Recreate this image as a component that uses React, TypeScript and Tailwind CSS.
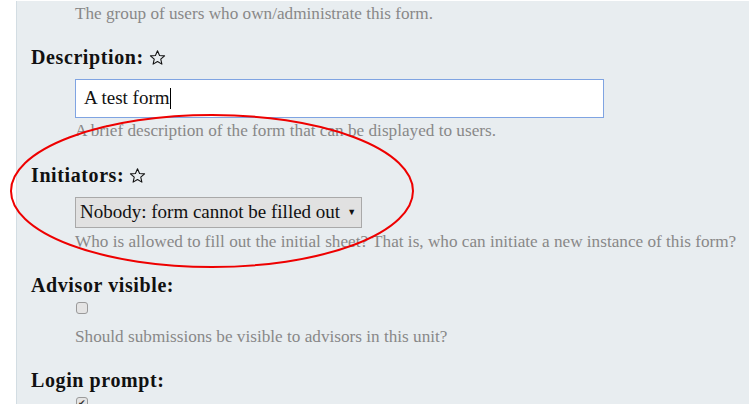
import React from "react";

const serif = { fontFamily: '"Liberation Serif", "DejaVu Serif", serif' };

const Star = () => (
  <svg width="17" height="17" viewBox="0 0 24 24" className="inline-block ml-[5px] -mt-[4px]">
    <path
      d="M12 2.5l2.9 6.6 7.1.6-5.4 4.7 1.6 7-6.2-3.7-6.2 3.7 1.6-7L2 9.7l7.1-.6z"
      fill="none"
      stroke="#111"
      strokeWidth="1.5"
      strokeLinejoin="round"
    />
  </svg>
);

const Label = ({ text, star }: { text: string; star?: boolean }) => (
  <div className="h-[24px] leading-[24px] text-[20px] tracking-[0.6px] font-bold text-[#111]">
    {text}
    {star && <Star />}
  </div>
);

const Help = ({ children }: { children: React.ReactNode }) => (
  <div className="h-[20px] leading-[20px] text-[17.2px] text-[#888] whitespace-nowrap">{children}</div>
);

export default function App() {
  return (
    <div className="relative flex w-[749px] h-[404px] overflow-hidden bg-white" style={serif}>
      <div className="w-[16px] shrink-0" />
      <div className="flex-1 mt-px bg-[#e8edf0] border-l border-[#d3dde3] pl-[14px] pt-[3px]">
        <div className="pl-[44px]">
          <Help>The group of users who own/administrate this form.</Help>
        </div>

        <div className="mt-[21px]">
          <Label text="Description:" star />
          <div className="pl-[44px] mt-[10px]">
            <div className="w-[529px] h-[39px] bg-white border border-[#7fa4e2] flex items-center pl-[8px] text-[19px] text-[#111]">
              A test form
              <span className="inline-block w-px h-[21px] bg-black" />
            </div>
            <div className="mt-[3px]">
              <Help>A brief description of the form that can be displayed to users.</Help>
            </div>
          </div>
        </div>

        <div className="mt-[22px]">
          <Label text="Initiators:" star />
          <div className="pl-[44px] mt-[10px]">
            <div className="w-[287px] h-[31px] bg-[#e1e1e1] border border-[#a9a9a9] flex items-center pl-[4px] text-[19px] text-[#111]">
              <span>Nobody: form cannot be filled out</span>
              <span className="text-[9px] ml-[7px]">▼</span>
            </div>
            <div className="mt-[4px]">
              <Help>
                Who is allowed to fill out the initial sheet? That is, who can initiate a new instance of this form?
              </Help>
            </div>
          </div>
        </div>

        <div className="mt-[21px]">
          <Label text="Advisor visible:" />
          <div className="pl-[45px] mt-[5px]">
            <div className="w-[12px] h-[12px] rounded-[3px] border border-[#9a9a9a] bg-[#e4e4e4]" />
            <div className="mt-[13px] -ml-px">
              <Help>Should submissions be visible to advisors in this unit?</Help>
            </div>
          </div>
        </div>

        <div className="mt-[21px]">
          <Label text="Login prompt:" />
          <div className="pl-[45px] mt-[5px]">
            <div className="w-[12px] h-[12px] rounded-[3px] border border-[#9a9a9a] bg-[#e4e4e4] flex items-center justify-center text-[9px] leading-none text-[#333]">
              ✔
            </div>
          </div>
        </div>
      </div>

      <svg className="absolute left-0 top-0 pointer-events-none" width="749" height="404">
        <ellipse cx="212" cy="191" rx="201" ry="76" fill="none" stroke="#ee0000" strokeWidth="2" />
      </svg>
    </div>
  );
}
